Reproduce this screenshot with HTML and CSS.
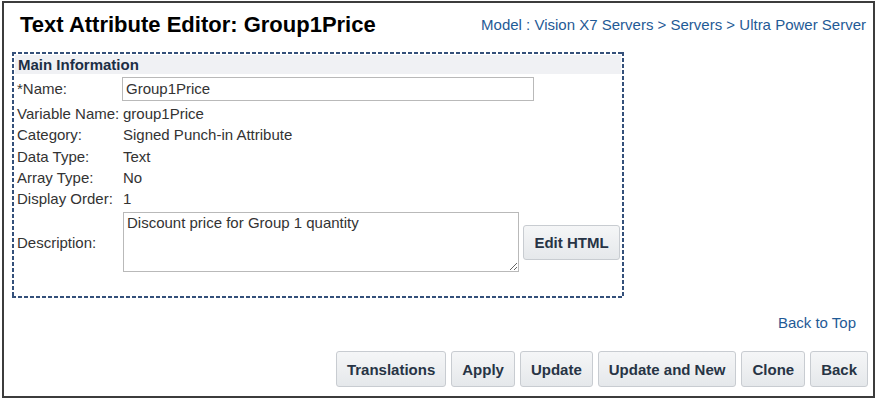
FILE: index.html
```html
<!DOCTYPE html>
<html>
<head>
<meta charset="utf-8">
<link rel="stylesheet" href="styles.css">
</head>
<body>
<div class="frame">
  <div class="header">
    <h1 class="title">Text Attribute Editor: Group1Price</h1>
    <div class="crumbs"><a href="#">Model : Vision X7 Servers</a> &gt; <a href="#">Servers</a> &gt; <a href="#">Ultra Power Server</a></div>
  </div>
  <div class="section">
    <div class="section-head">Main Information</div>
    <div class="rows">
      <div class="row row-name"><span class="label">*Name:</span><input class="text-input" type="text" value="Group1Price"></div>
      <div class="row"><span class="label">Variable Name:</span><span class="value">group1Price</span></div>
      <div class="row"><span class="label">Category:</span><span class="value">Signed Punch-in Attribute</span></div>
      <div class="row"><span class="label">Data Type:</span><span class="value">Text</span></div>
      <div class="row"><span class="label">Array Type:</span><span class="value">No</span></div>
      <div class="row"><span class="label">Display Order:</span><span class="value">1</span></div>
      <div class="row row-desc"><span class="label">Description:</span><textarea class="text-area">Discount price for Group 1 quantity</textarea><button class="btn btn-edit">Edit HTML</button></div>
    </div>
  </div>
  <div class="back-top"><a href="#">Back to Top</a></div>
  <div class="actions">
    <button class="btn">Translations</button>
    <button class="btn">Apply</button>
    <button class="btn">Update</button>
    <button class="btn">Update and New</button>
    <button class="btn">Clone</button>
    <button class="btn">Back</button>
  </div>
</div>
</body>
</html>
```
FILE: styles.css
```css
html, body {
  margin: 0;
  padding: 0;
  background: #ffffff;
}
body {
  padding: 1px 1px 1px 2px;
  font-family: "Liberation Sans", Arial, sans-serif;
  font-size: 15px;
  color: #333333;
}
.frame {
  box-sizing: border-box;
  width: 873px;
  height: 397px;
  border: 2px solid #3c3c3c;
  padding: 0 5px 0 8px;
  display: flex;
  flex-direction: column;
}
.header {
  display: flex;
  justify-content: space-between;
  align-items: flex-start;
  height: 49px;
}
.title {
  margin: 8px 0 0 8px;
  font-size: 22px;
  font-weight: bold;
  color: #000000;
  line-height: 28px;
}
.crumbs {
  color: #1f5a96;
  font-size: 15px;
  margin-top: 13px;
  margin-right: 2px;
}
.crumbs a {
  color: #1f5a96;
  text-decoration: none;
}
.section {
  box-sizing: border-box;
  width: 612px;
  height: 246px;
  padding: 3px;
  background:
    repeating-linear-gradient(90deg, #34507a 0 4px, transparent 4px 6px) top left / 100% 2px no-repeat,
    repeating-linear-gradient(90deg, #34507a 0 4px, transparent 4px 6px) bottom left / 100% 2px no-repeat,
    repeating-linear-gradient(180deg, #34507a 0 4px, transparent 4px 6px) top left / 2px 100% no-repeat,
    repeating-linear-gradient(180deg, #34507a 0 4px, transparent 4px 6px) top right / 2px 100% no-repeat;
}
.section-head {
  background: #f0f1f4;
  font-weight: bold;
  color: #1c2e45;
  height: 19px;
  line-height: 19px;
  padding-left: 3px;
}
.rows {
  padding-left: 2px;
}
.row {
  display: flex;
  align-items: center;
  height: 21.3px;
}
.label {
  width: 106px;
  flex: none;
}
.row-name {
  height: 29px;
}
.text-input {
  box-sizing: border-box;
  width: 412px;
  height: 24px;
  border: 1px solid #b9b9b9;
  font-family: "Liberation Sans", Arial, sans-serif;
  font-size: 15px;
  color: #333;
  padding: 0 3px;
  margin-left: -1px;
}
.row-desc {
  height: 66px;
  align-items: center;
}
.text-area {
  box-sizing: border-box;
  width: 396px;
  height: 60px;
  border: 1px solid #b9b9b9;
  font-family: "Liberation Sans", Arial, sans-serif;
  font-size: 15px;
  color: #333;
  padding: 1px 3px;
  resize: both;
}
.btn {
  box-sizing: border-box;
  height: 36px;
  padding: 0 10px;
  border: 1px solid #c8ccd1;
  border-radius: 3px;
  background: linear-gradient(#f5f6f7, #e5e8eb);
  font-family: "Liberation Sans", Arial, sans-serif;
  font-size: 15px;
  font-weight: bold;
  color: #273445;
}
.btn-edit {
  margin-left: 4px;
  width: 97px;
  height: 35px;
  padding: 0;
}
.back-top {
  text-align: right;
  padding-right: 12px;
  margin-top: 16px;
}
.back-top a {
  color: #1f5a96;
  text-decoration: none;
}
.actions {
  display: flex;
  justify-content: flex-end;
  gap: 5px;
  margin-top: 20px;
}
```
